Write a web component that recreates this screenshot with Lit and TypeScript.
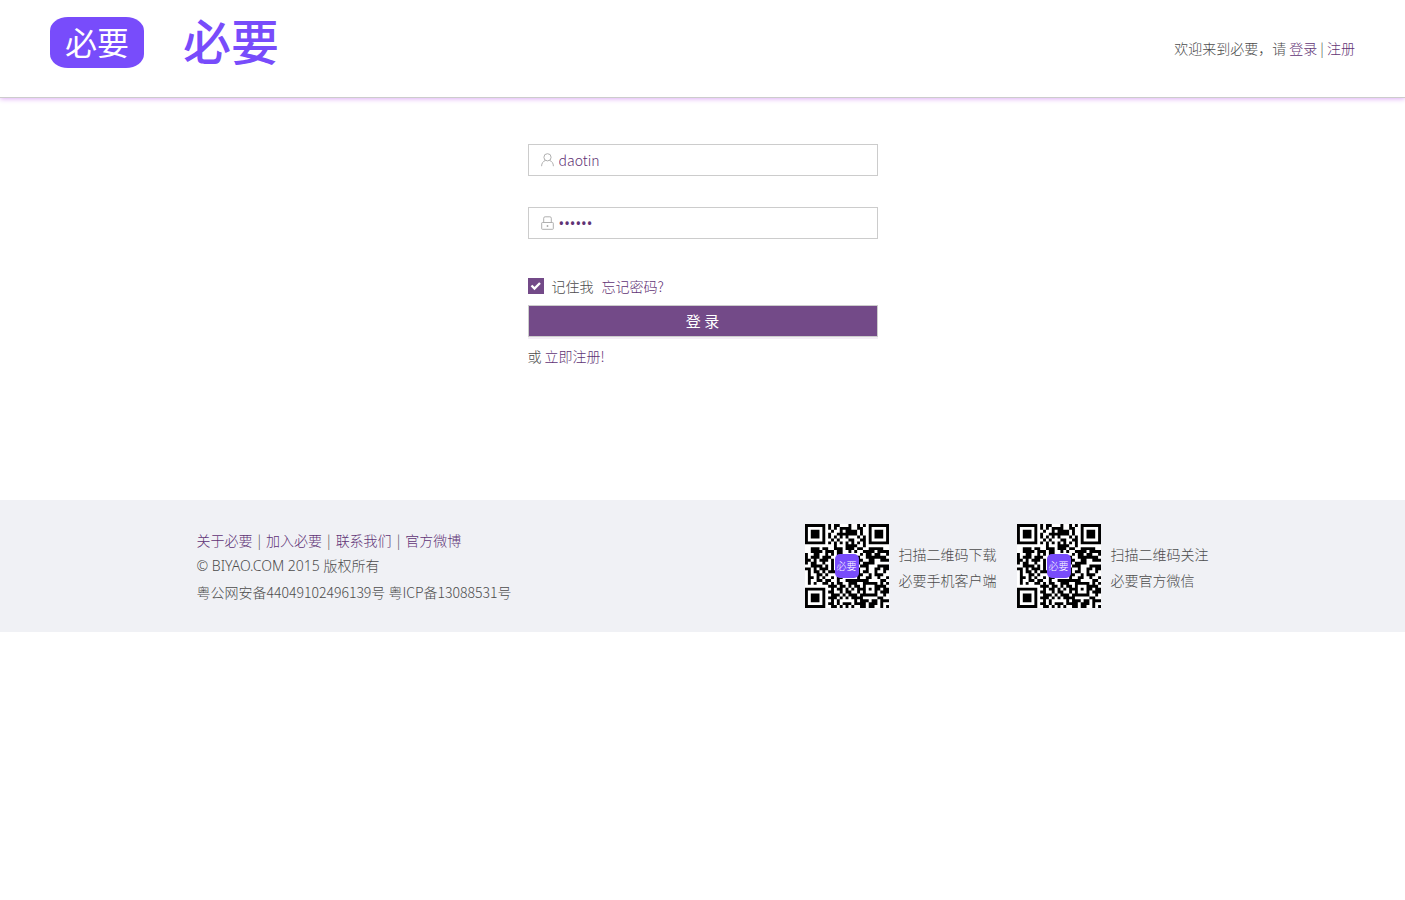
import { LitElement, html, css, svg } from "lit";
import { customElement, property } from "lit/decorators.js";

const QR_ROWS = [
  "11111110101100010010101111111",
  "10000010101011110011001000001",
  "10111010010010111101001011101",
  "10111010100111111101001011101",
  "10111010101010100010101011101",
  "10000010010100011001101000001",
  "11111110101010101010101111111",
  "00000000001000111100100000000",
  "00111011001110111011001111100",
  "00111101110110010100111101111",
  "10011001010110000001011011001",
  "10111011100000000010011111110",
  "11010111010000000011001100111",
  "10110010010000000010111100000",
  "00111101010000000001110001111",
  "11010111010000000010010011011",
  "01011010111000000010110010010",
  "01001101000000000111001011100",
  "01101010010110000010011001001",
  "01001101100100111111110000110",
  "01010011010110011100111110101",
  "00000000111011010110100011110",
  "11111110010110101011101011011",
  "10000010110010110010100010111",
  "10111010011101011101111110010",
  "10111010111010101111000001100",
  "10111010010100000101110110111",
  "10000010110101110111101110100",
  "11111110011010101001101100101",
];

const QR_PATH = QR_ROWS.map((row, y) =>
  [...row].map((cell, x) => (cell === "1" ? `M${x} ${y}h1v1h-1z` : "")).join("")
).join("");

@customElement("qr-card")
class QrCard extends LitElement {
  @property() first = "";
  @property() second = "";

  static styles = css`
    :host {
      display: flex;
      align-items: center;
      gap: 10px;
    }
    .code {
      display: grid;
      place-items: center;
    }
    .code > * {
      grid-area: 1 / 1;
    }
    .code svg {
      display: block;
      width: 84px;
      height: 84px;
    }
    .mark {
      display: grid;
      place-items: center;
      width: 24px;
      height: 24px;
      border-radius: 5px;
      background: #784cfb;
      color: #fff;
      font-size: 10px;
      line-height: 24px;
    }
    p {
      margin: 0;
      padding-top: 2px;
      line-height: 26px;
      white-space: nowrap;
    }
  `;

  render() {
    return html`
      <div class="code">
        <svg viewBox="0 0 29 29" role="img" aria-label="${this.first}">
          ${svg`<rect width="29" height="29" fill="#fff"/><path d=${QR_PATH} fill="#000"/>`}
        </svg>
        <span class="mark">必要</span>
      </div>
      <p>${this.first}<br />${this.second}</p>
    `;
  }
}

@customElement("app-root")
class AppRoot extends LitElement {
  static styles = css`
    :host {
      display: block;
      min-height: 100vh;
      background: #fff;
      color: #4c4c4c;
      font-family: "Noto Sans CJK SC", "Noto Sans", sans-serif;
      font-weight: 300;
      font-size: 14px;
      line-height: 26px;
    }
    * {
      box-sizing: border-box;
    }
    a {
      color: #5f3375;
      text-decoration: none;
    }
    header {
      display: flex;
      justify-content: space-between;
      align-items: center;
      min-height: 98px;
      padding: 0 50px 2px;
      border-bottom: 1px solid #ccc;
      box-shadow: 0 1px 5px #dfaef5;
    }
    .brand {
      display: flex;
      align-items: flex-start;
      align-self: flex-start;
      gap: 28px;
      padding-top: 17px;
      color: #784cfb;
      font-weight: 400;
    }
    .badge {
      width: 94px;
      height: 51px;
      border-radius: 18px / 14px;
      background: #784cfb;
      color: #fff;
      text-align: center;
      font-size: 32px;
      line-height: 48px;
    }
    .wordmark {
      width: 118px;
      text-align: center;
      font-size: 48px;
      font-weight: 500;
      line-height: 44px;
    }
    form {
      display: flex;
      flex-direction: column;
      width: 100%;
      max-width: 350px;
      margin: 0 auto;
      padding: 46px 0 131px;
    }
    .field {
      display: flex;
      align-items: center;
      gap: 5px;
      height: 32px;
      margin-bottom: 31px;
      padding: 0 12px;
      border: 1px solid #ccc;
    }
    .field svg {
      flex: none;
      width: 13px;
      height: 14px;
      fill: none;
      stroke: #b0b0b0;
    }
    .field input {
      flex: 1;
      min-width: 0;
      padding: 0;
      border: 0;
      outline: 0;
      background: none;
      color: #5f3375;
      font: inherit;
      line-height: 20px;
    }
    .field input[type="password"] {
      font-family: "Noto Sans", sans-serif;
      font-size: 15px;
      font-weight: 400;
    }
    .options {
      display: flex;
      align-items: center;
      gap: 8px;
      margin: 3px 0 6px;
    }
    .remember {
      display: flex;
      align-items: center;
      gap: 8px;
    }
    .tick {
      display: grid;
      place-items: center;
    }
    .tick > * {
      grid-area: 1 / 1;
    }
    .tick input {
      appearance: none;
      width: 16px;
      height: 16px;
      margin: 0;
      border: 1px solid #734a88;
    }
    .tick input:checked {
      background: #734a88;
    }
    .tick svg {
      width: 16px;
      height: 16px;
      fill: none;
      stroke: #fff;
      stroke-width: 2.4;
      pointer-events: none;
    }
    button {
      height: 32px;
      margin-bottom: 6px;
      padding: 0;
      border: 1px solid #ccc;
      background: #734a88;
      box-shadow: 0 2px 0 #f3eff5;
      color: #fff;
      font: inherit;
      font-size: 15px;
      font-weight: 400;
      line-height: 28px;
    }
    .join {
      margin: 0;
    }
    footer {
      padding: 24px 20px;
      background: #f0f1f5;
    }
    .inner {
      display: flex;
      flex-wrap: wrap;
      justify-content: space-between;
      align-items: center;
      gap: 20px;
      max-width: 1012px;
      margin: 0 auto;
    }
    .legal p {
      margin: 0;
    }
    .legal nav {
      display: flex;
      gap: 5px;
    }
    .legal .copyright {
      font-family: "Noto Sans", "Noto Sans CJK SC", sans-serif;
    }
    .codes {
      display: flex;
      gap: 20px;
    }
  `;

  render() {
    return html`
      <header>
        <div class="brand">
          <span class="badge">必要</span>
          <span class="wordmark">必要</span>
        </div>
        <div>欢迎来到必要，请 <a href="#">登录</a> | <a href="#">注册</a></div>
      </header>

      <form @submit=${(e: Event) => e.preventDefault()}>
        <label class="field">
          <svg viewBox="0 0 13 14">
            <circle cx="6.5" cy="4.3" r="3.6" />
            <path d="M.6 13.2c0-3.100 1.600-5 3.900-5.800M12.400 13.200c0-3.100-1.600-5-3.900-5.800" />
          </svg>
          <input type="text" aria-label="用户名" .value=${"daotin"} />
        </label>
        <label class="field">
          <svg viewBox="0 0 13 14">
            <rect x=".7" y="6.500" width="11.600" height="6.800" rx=".6" />
            <path d="M2.700 6.500V2.200Q2.700.8 4.100.8h4.800q1.400 0 1.400 1.400v4.300M6.500 9v2M5.500 10h2" />
          </svg>
          <input type="password" aria-label="密码" .value=${"daotin"} />
        </label>
        <div class="options">
          <label class="remember">
            <span class="tick">
              <input type="checkbox" checked />
              <svg viewBox="0 0 16 16"><path d="M3.500 7.500l3 3L12 5" /></svg>
            </span>
            记住我
          </label>
          <a href="#">忘记密码?</a>
        </div>
        <button type="submit">登 录</button>
        <p class="join">或 <a href="#">立即注册!</a></p>
      </form>

      <footer>
        <div class="inner">
          <div class="legal">
            <nav>
              <a href="#">关于必要</a><span>|</span><a href="#">加入必要</a><span>|</span
              ><a href="#">联系我们</a><span>|</span><a href="#">官方微博</a>
            </nav>
            <p class="copyright">© BIYAO.COM 2015 版权所有</p>
            <p>粤公网安备44049102496139号 粤ICP备13088531号</p>
          </div>
          <div class="codes">
            <qr-card first="扫描二维码下载" second="必要手机客户端"></qr-card>
            <qr-card first="扫描二维码关注" second="必要官方微信"></qr-card>
          </div>
        </div>
      </footer>
    `;
  }
}
